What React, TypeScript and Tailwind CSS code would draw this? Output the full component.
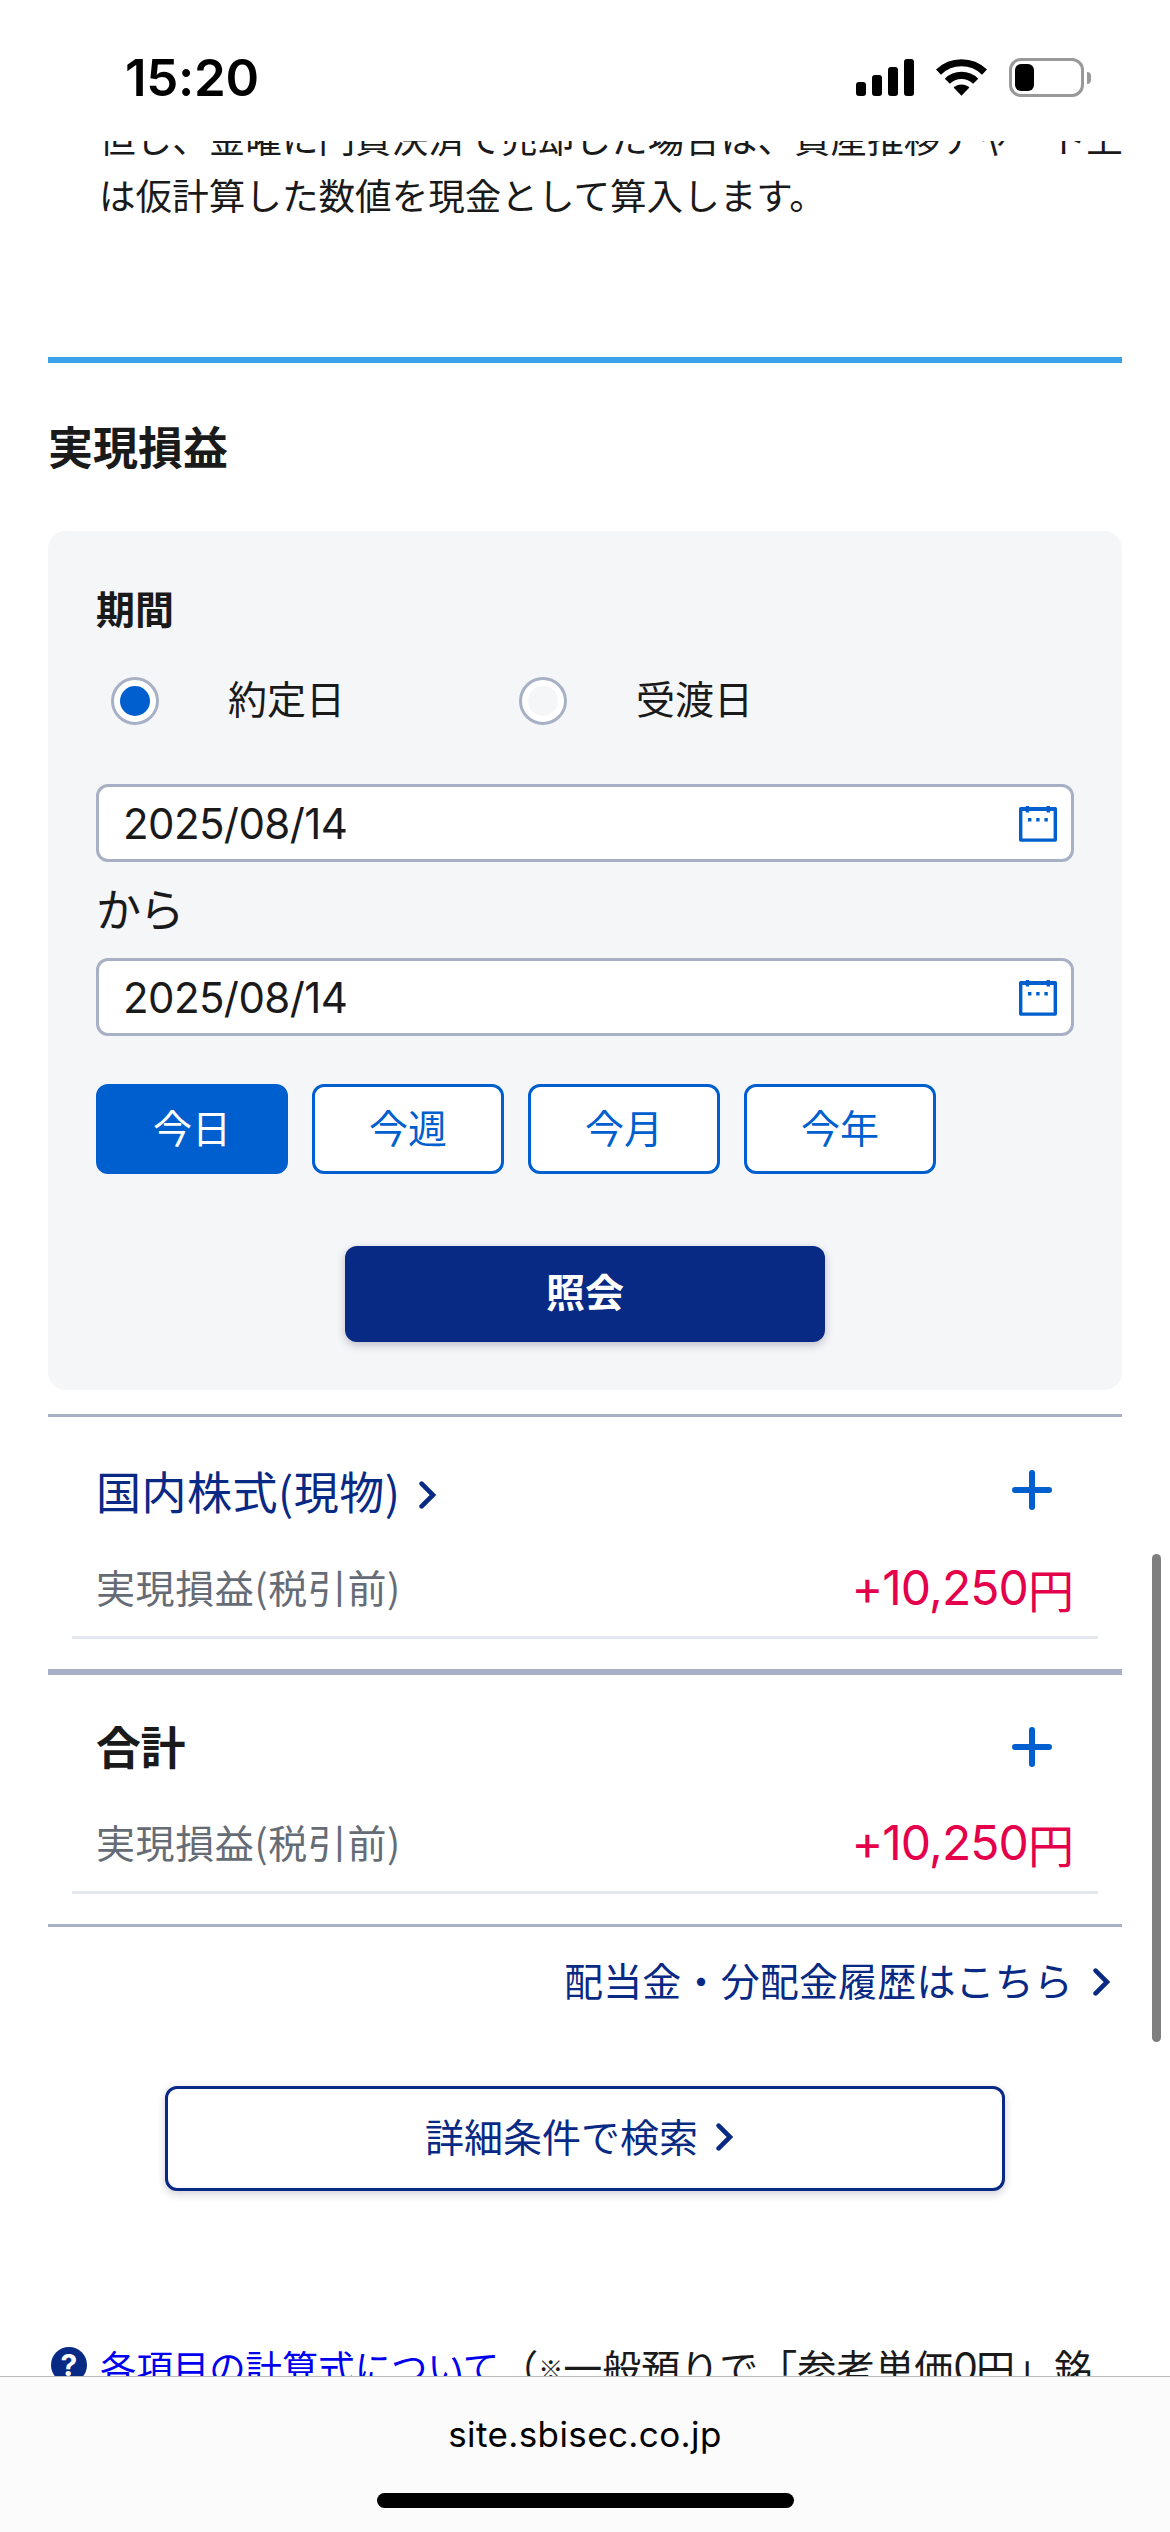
import { useState } from "react";
import clsx from "clsx";

const periods = ["今日", "今週", "今月", "今年"];
const dateTypes = ["約定日", "受渡日"];

function Chevron({ className }: { className?: string }) {
  return (
    <svg
      viewBox="0 0 17 28"
      fill="none"
      stroke="currentColor"
      strokeWidth="4.6"
      strokeLinecap="round"
      className={clsx("w-[17px] h-7 shrink-0", className)}
    >
      <path d="M2.6 2.6 14 14 2.6 25.4" />
    </svg>
  );
}

function Plus() {
  return (
    <svg
      viewBox="0 0 40 40"
      stroke="#005fce"
      strokeWidth="6"
      strokeLinecap="round"
      className="size-10"
    >
      <path d="M20 3v34M3 20h34" />
    </svg>
  );
}

function StatusBar() {
  return (
    <header className="h-[141px] shrink-0 flex justify-between pl-[125px] pr-[79px] pt-[58px] text-black">
      <p className="font-['Inter'] font-semibold text-[51px] leading-[39px] tracking-[-0.3px]">
        15:20
      </p>
      <div className="flex h-[39px]">
        <div className="flex items-end gap-1.5 h-[38px]">
          <div className="w-2.5 h-3.5 rounded-[3px] bg-black"></div>
          <div className="w-2.5 h-[21px] rounded-[3px] bg-black"></div>
          <div className="w-2.5 h-[29px] rounded-[3px] bg-black"></div>
          <div className="w-2.5 h-[37px] rounded-[3px] bg-black"></div>
        </div>
        <svg
          viewBox="0 0 51 38"
          fill="none"
          stroke="black"
          strokeWidth="7.2"
          className="w-[51px] h-[38px] ml-[22px]"
        >
          <path d="M2.5 14.1a33 33 0 0 1 46 0M11.3 23.2a20.3 20.3 0 0 1 28.4 0" />
          <path
            d="M25.5 37.7 17.6 29.6a11.3 11.3 0 0 1 15.8 0z"
            fill="black"
            stroke="none"
          />
        </svg>
        <div className="w-[75px] h-[39px] ml-[22px] border-3 border-[#999] rounded-[12px] p-[3px]">
          <div className="w-[19px] h-[27px] bg-black rounded-[6px]"></div>
        </div>
        <div className="w-1 h-3 ml-[3px] mt-[14px] bg-[#999] rounded-r-full"></div>
      </div>
    </header>
  );
}

function DateField({ value }: { value: string }) {
  return (
    <div className="h-[78px] flex items-center justify-between border-3 border-[#a7b0c5] rounded-[12px] bg-white pl-6 pr-[14px]">
      <span className="pt-0.5 font-['Inter'] text-[42px] leading-none tracking-[-0.6px]">
        {value}
      </span>
      <svg
        viewBox="0 0 38 36"
        fill="none"
        stroke="#005fce"
        strokeWidth="3.4"
        className="w-[38px] h-9 mt-0.5"
      >
        <path d="M1.7 2.7h34.6v31.4h-34.6z" strokeLinejoin="round" />
        <path d="M1.5 3.4h35M8.5 0v6.5M29.3 0v6.5" />
        <path d="M9 13.7h3.4M17.2 13.7h3.4M25.4 13.7h3.4" />
      </svg>
    </div>
  );
}

function ProfitRow() {
  return (
    <div className="mx-6 px-6 h-[103px] flex items-center justify-between border-b-3 border-[#e4e8ee]">
      <span className="text-[39px] leading-none tracking-[0.6px] text-[#666c76]">
        実現損益(税引前)
      </span>
      <span className="pt-1 font-['Inter','Noto_Sans_CJK_JP',sans-serif] text-[48px] leading-[58px] tracking-[-0.9px] text-[#e4004b] flex items-center">
        +10,250
        <span className="font-['Noto_Sans_CJK_JP',sans-serif] text-[46px] tracking-normal">
          円
        </span>
      </span>
    </div>
  );
}

export default function App() {
  const [dateType, setDateType] = useState("約定日");
  const [period, setPeriod] = useState("今日");

  return (
    <main
      lang="ja"
      className="relative w-[1170px] h-[2532px] flex flex-col overflow-hidden bg-white text-[#1a1a1b] font-['Noto_Sans_CJK_JP',sans-serif]"
    >
      <StatusBar />

      <div className="h-[2235px] shrink-0 overflow-hidden px-12">
        <div className="-mt-8 pl-[51px] text-[36.6px] leading-[57px] whitespace-nowrap">
          <p>但し、金曜に円貨決済で売却した場合は、資産推移チャート上</p>
          <p>は仮計算した数値を現金として算入します。</p>
        </div>

        <div className="mt-[134px] h-1.5 bg-[#3ba3ec]"></div>
        <h2 className="h-[168px] pb-[3px] flex items-center text-[45px] leading-none font-bold">
          実現損益
        </h2>

        <div className="h-[859px] rounded-[18px] bg-[#f5f6f8] p-12">
          <h3 className="h-14 flex items-center text-[39px] leading-none font-bold">
            期間
          </h3>
          <div className="h-[132px] flex">
            {dateTypes.map((type) => (
              <label
                key={type}
                onClick={() => setDateType(type)}
                className="w-[408px] pl-[15px] flex items-center gap-[69px]"
              >
                <span className="size-12 rounded-full border-3 border-[#a7b0c5] bg-white flex items-center justify-center">
                  <span
                    className={clsx(
                      "size-[30px] rounded-full",
                      dateType === type ? "bg-[#005fce]" : "bg-[#f5f6f8]"
                    )}
                  ></span>
                </span>
                <span className="pb-[7px] text-[39px] leading-none">{type}</span>
              </label>
            ))}
          </div>

          <div className="mt-[17px]">
            <DateField value="2025/08/14" />
            <p className="h-24 pb-[5px] flex items-center text-[45px] leading-none tracking-[-1.5px]">
              から
            </p>
            <DateField value="2025/08/14" />
          </div>

          <div className="mt-12 flex gap-6">
            {periods.map((name) => (
              <button
                key={name}
                onClick={() => setPeriod(name)}
                className={clsx(
                  "w-48 h-[90px] pb-1.5 border-3 border-[#005fce] rounded-[12px] text-[39px] leading-none",
                  period === name
                    ? "bg-[#005fce] text-white"
                    : "bg-white text-[#005fce]"
                )}
              >
                {name}
              </button>
            ))}
          </div>

          <button className="mt-[72px] mx-auto block w-[480px] h-24 pb-2 rounded-[12px] bg-[#082984] text-white text-[39px] leading-none font-bold shadow-[0_3px_9px_rgba(20,20,60,0.25)]">
            照会
          </button>
        </div>

        <section className="mt-6 border-t-3 border-[#a7b0c5] pb-[30px]">
          <div className="h-[119px] pt-[27px] pl-12 pr-[70px] flex items-center justify-between">
            <a className="flex items-center text-[45px] leading-none tracking-[0.5px] text-[#082984]">
              国内株式(現物)
              <Chevron className="ml-[19px] mt-[9px]" />
            </a>
            <Plus />
          </div>
          <ProfitRow />
        </section>

        <section className="border-t-6 border-b-3 border-[#a7b0c5] pb-[30px]">
          <div className="h-[116px] pt-[27px] pl-12 pr-[70px] flex items-center justify-between">
            <p className="pb-0.5 text-[45px] leading-none font-bold tracking-[-0.5px]">
              合計
            </p>
            <Plus />
          </div>
          <ProfitRow />
        </section>

        <a className="h-[104px] pr-3 flex items-center justify-end text-[39px] leading-none tracking-[0.15px] text-[#082984]">
          配当金・分配金履歴はこちら
          <Chevron className="ml-5 mt-1.5" />
        </a>

        <button className="mt-[55px] mx-auto w-[840px] h-[105px] pb-1.5 pr-3 flex items-center justify-center border-3 border-[#082984] rounded-[12px] bg-white text-[39px] leading-none text-[#082984] shadow-[0_3px_9px_rgba(20,20,60,0.2)]">
          詳細条件で検索
          <Chevron className="ml-[18px] mt-[3px]" />
        </button>

        <div className="mt-[139px] h-[72px] pl-[3px] flex items-center whitespace-nowrap leading-none text-[39px]">
          <span className="size-9 mt-[-2px] rounded-full bg-[#082984] text-white font-['Inter'] font-bold text-[30px] leading-9 text-center">
            ?
          </span>
          <a className="ml-[13px] text-[36.4px] text-[#0000ee]">
            各項目の計算式について
          </a>
          <span>（</span>
          <span className="text-[25px] pt-1 font-bold">※</span>
          <span>一般預りで「参考単価</span>
          <span className="font-['Inter'] tracking-[-2px]">0</span>
          <span>円」銘</span>
        </div>
      </div>

      <footer className="h-[156px] shrink-0 border-t border-[#bcbcc0] bg-[#fbfbfc] flex flex-col items-center text-black">
        <p className="mt-[35px] h-11 font-['Inter'] text-[35px] leading-11 tracking-[0.4px]">
          site.sbisec.co.jp
        </p>
        <div className="mt-[37px] w-[417px] h-[15px] rounded-full bg-black"></div>
      </footer>

      {/* scroll indicator */}
      <div className="absolute left-[1152px] top-[1554px] w-[9px] h-[488px] rounded-full bg-[#7f7f7f]"></div>
    </main>
  );
}
